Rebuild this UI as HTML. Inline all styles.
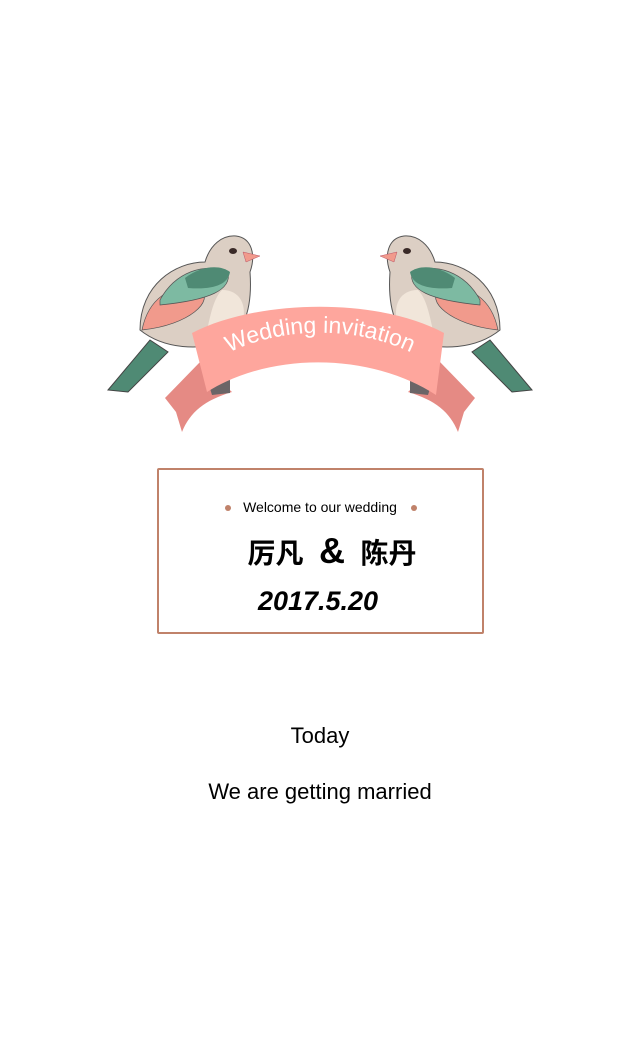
<!DOCTYPE html>
<html><head><meta charset="utf-8"><style>
body{margin:0;width:640px;height:1040px;background:#fff;position:relative;font-family:"Liberation Sans","Noto Sans CJK SC",sans-serif;overflow:hidden}
.box{position:absolute;left:157px;top:468px;width:323px;height:162px;border:2px solid #c0826a;border-radius:2px}
.t{position:absolute;width:640px;text-align:center;left:0;color:#000}
.dot{position:absolute;width:6px;height:6px;border-radius:3px;background:#c0826a}
</style></head><body>
<svg width="640" height="460" style="position:absolute;left:0;top:0">
<defs>
<g id="bird">
<path d="M108,390 L150,340 L168,352 L128,392 Z" fill="#4f8a74" stroke="#444" stroke-width="1"/>
<path d="M140,330 C140,285 175,262 205,262 C210,245 222,235 236,236 C252,238 256,255 250,272 C252,300 248,330 225,342 C200,350 165,350 140,330 Z" fill="#dccfc4" stroke="#555" stroke-width="1"/>
<path d="M222,290 C240,290 248,305 242,325 C232,340 215,342 205,338 C210,320 212,300 222,290 Z" fill="#f1e6da"/>
<path d="M142,330 C148,300 170,282 200,290 C215,300 190,325 142,330 Z" fill="#f19a8c" stroke="#555" stroke-width="0.7"/>
<path d="M160,300 C175,272 205,262 228,272 C232,290 210,300 160,305 Z" fill="#7dbaa2" stroke="#555" stroke-width="0.7"/>
<path d="M185,278 C200,266 220,264 230,272 C228,285 212,290 188,288 Z" fill="#4f8a74"/>
<path d="M243,252 L260,256 L246,262 Z" fill="#f19a8c" stroke="#b56" stroke-width="0.5"/>
<ellipse cx="233" cy="251" rx="4" ry="3" fill="#3a2a28"/>
</g>
</defs>
<use href="#bird"/>
<use href="#bird" transform="translate(640,0) scale(-1,1)"/>
<path d="M165,398 L200,362 L232,392 C205,400 190,412 182,432 L176,412 Z" fill="#e58a84"/>
<path d="M475,398 L440,362 L408,392 C435,400 450,412 458,432 L464,412 Z" fill="#e58a84"/>
<path d="M208,382 L230,380 L230,393 L212,395 Z" fill="#6b6567"/>
<path d="M432,382 L410,380 L410,393 L428,395 Z" fill="#6b6567"/>
<path d="M192,333 C260,298 380,298 444,333 L436,395 C370,352 270,352 207,392 Z" fill="#fea69d"/>
<path id="arc" d="M222,356 C280,325 360,325 418,356" fill="none"/>
<text font-family="Liberation Sans, sans-serif" font-size="23" fill="#fff"><textPath href="#arc" startOffset="50%" text-anchor="middle">Wedding  invitation</textPath></text>
</svg>
<div class="box"></div>
<div class="dot" style="left:225px;top:505px"></div>
<div class="dot" style="left:411px;top:505px"></div>
<div class="t" style="top:499px;font-size:14px">Welcome to our wedding</div>
<div class="t" style="top:530px;font-size:28px;font-weight:bold;left:12px">厉凡&nbsp; <span style="font-size:36px">&amp;</span> &nbsp;陈丹</div>
<div class="t" style="top:586px;font-size:27px;font-weight:bold;font-style:italic;left:-2px">2017.5.20</div>
<div class="t" style="top:723px;font-size:22px">Today</div>
<div class="t" style="top:779px;font-size:22px">We are getting married</div>
</body></html>
